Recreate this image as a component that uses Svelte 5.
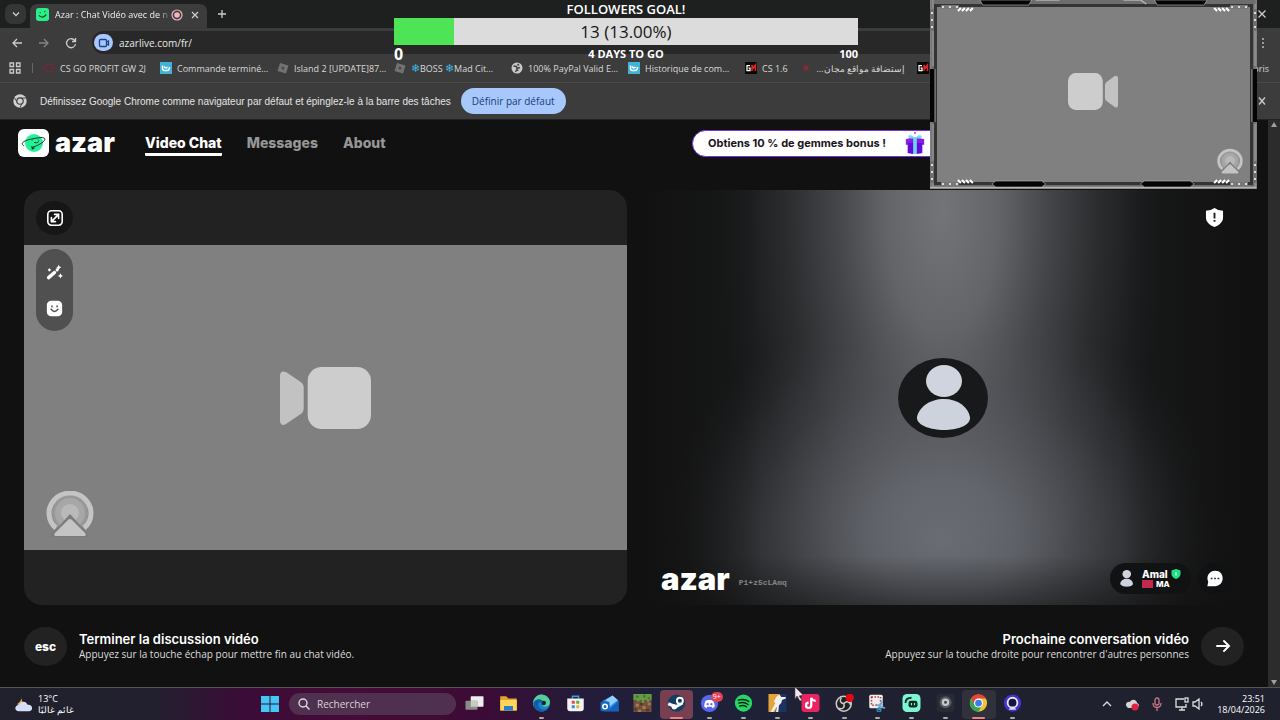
<script>
  const bookmarks = [
    { label: 'CS GO PROFIT GW 2J', icon: 'red', wide: true },
    { label: 'Commande terminé…', icon: 'shop', wide: true },
    { label: 'Island 2 [UPDATE]87…', icon: 'roblox', wide: true },
    { label: 'BOSS', second: 'Mad Cit…', icon: 'roblox', wide: true },
    { label: '100% PayPal Valid E…', icon: 'globe', wide: true },
    { label: 'Historique de com…', icon: 'shop', wide: true },
    { label: 'CS 1.6', icon: 'gm' },
    { label: 'إستضافة مواقع مجان…', icon: 'star', rtl: true },
    { label: 'GM', icon: 'gm' }
  ];

  const icons = {
    red: '<rect x="3" y="5" width="18" height="14" rx="3" fill="none" stroke="#7a2436" stroke-width="2.5"/>',
    shop: '<rect width="24" height="24" fill="#3fb4d8"/><path d="M5 7v6q0 4 4 4h5q5 0 5-7M8 9q3 5 7 1" fill="none" stroke="#fff" stroke-width="3"/>',
    roblox: '<path d="M6 2l17 5-5 16L1 18z" fill="#727272"/><path d="M10 9l5 1.500-1.500 5-5-1.500z" fill="#4a4a4a"/>',
    globe: '<circle cx="12" cy="12" r="11" fill="#c9c9c9"/><path d="M5 8l6 1 1 4 6-2M13 4l3 3M9 20l2-4 4 1" fill="none" stroke="#454545" stroke-width="3"/>',
    gm: '<rect width="24" height="24" fill="#080808"/><path d="M10 7H4v10h6v-5H7" fill="none" stroke="#fff" stroke-width="2.500"/><path d="M14 18V6l3 6 4-6v12" fill="none" stroke="#e22424" stroke-width="3"/>',
    star: '<path d="M12 4l2 5h6l-5 4 2 6-5-4-5 4 2-6-5-4h6z" fill="#8d2a34"/>'
  };

  const apps = [
    { name: 'Vue des tâches', svg: '<rect x="7" y="3" width="17" height="14" rx="1" fill="#eee"/><rect x="0" y="9" width="16" height="12" rx="1" fill="#888b88"/><path d="M7 9h9v8H7z" fill="#c7cac7"/>' },
    { name: 'Explorateur', svg: '<path d="M1 3h8l3 3h11v16H1z" fill="#e5a52a"/><path d="M1 8h22v14H1z" fill="#ffd45a"/><path d="M6 16h12v6H6z" fill="#2681c8"/>' },
    { name: 'Edge', dot: true, svg: '<circle cx="12" cy="12" r="11.500" fill="#1685cf"/><path d="M1 12C2 3 9 0 14 1c7 1 10 7 9 12-1 4-7 5-10 3 3-3 1-7-3-7-5 0-9 4-8 9z" fill="#55cf94"/><path d="M1 12c2-5 10-7 13-2-5-1-9 4-5 8 3 4 8 4 12 1-5 7-18 6-20-7z" fill="#155ba5"/><circle cx="15" cy="12" r="3" fill="#17243e"/>' },
    { name: 'Microsoft Store', svg: '<path d="M8 6V3h8v3" fill="none" stroke="#36a4dc" stroke-width="2"/><path d="M1 6h22v13q0 4-4 4H5q-4 0-4-4z" fill="#f2f2f2"/><path d="M7 9h4v4H7z" fill="#e64c35"/><path d="M13 9h4v4h-4z" fill="#66a83a"/><path d="M7 15h4v4H7z" fill="#2397db"/><path d="M13 15h4v4h-4z" fill="#e9b526"/>' },
    { name: 'Outlook', svg: '<path d="M3 9L16 2l8 7v14H5z" fill="#328ce0"/><path d="M7 8l9-6 7 6-10 8z" fill="#8fd1ff"/><path d="M9 23L24 9v14z" fill="#1361bd"/><rect x="0" y="10" width="12" height="13" rx="2" fill="#1767bd"/><circle cx="6" cy="16.500" r="3" fill="none" stroke="#fff" stroke-width="2"/>' },
    { name: 'Minecraft', svg: '<rect width="24" height="24" fill="#74513a"/><path d="M0 0h24v8h-3v3h-3V8h-4v4h-3V8H8v2H5V8H0z" fill="#659c43"/><path d="M3 2h4v3H3zM13 1h3v4h-3zM19 4h3v3h-3z" fill="#467832"/><path d="M3 13h4v4H3zM12 16h4v4h-4zM19 12h4v3h-4zM6 21h4v3H6z" fill="#a77955"/><path d="M9 12h3v3H9zM17 20h4v3h-4zM1 19h3v3H1z" fill="#4f3529"/>' },
    { name: 'Steam', dot: true, active: 'red', svg: '<circle cx="12" cy="12" r="11.500" fill="#153c62"/><path d="M1 13l10 4 9-5" stroke="#f3f3f3" stroke-width="4" fill="none"/><circle cx="16.500" cy="9" r="4" fill="#153c62" stroke="#fff" stroke-width="2.500"/><circle cx="9" cy="17" r="3.500" fill="#fff"/>' },
    { name: 'Discord', dot: true, svg: '<circle cx="12" cy="12.500" r="11.500" fill="#5965ec"/><path d="M5 17c0-4 1-7 2-8l3-1h4l3 1c1 2 2 5 2 8l-3 2-1-2H9l-1 2z" fill="#fff"/><circle cx="9.500" cy="13.500" r="1.500" fill="#5965ec"/><circle cx="14.500" cy="13.500" r="1.500" fill="#5965ec"/>', badge: '9+' },
    { name: 'Spotify', dot: true, svg: '<circle cx="12" cy="12" r="11.500" fill="#25d865"/><path d="M5 8c5-1 10-1 14 2M6 12c4-1 8-1 12 2M7 16c3-1 6-1 9 1" fill="none" stroke="#102416" stroke-width="2" stroke-linecap="round"/>' },
    { name: 'Counter-Strike', dot: true, svg: '<rect width="24" height="24" fill="#1b3262"/><path d="M0 0h15L9 24H0z" fill="#e6a33a"/><path d="M11 3l4-2 2 3 6 0v2l-5 2-1 4-3 3-1 9h-3l1-7-5 7H3l6-12-2-2z" fill="#f2f1ed"/>' },
    { name: 'TikTok', dot: true, svg: '<rect width="24" height="24" rx="4" fill="#eb2360"/><path d="M13 5v10a3.500 3.500 0 1 1-3.500-3.500M13 5c1 3 3 4 6 4" fill="none" stroke="#fff" stroke-width="3"/>' },
    { name: 'OBS', dot: true, svg: '<circle cx="11" cy="13" r="10" fill="#202024" stroke="#ccc" stroke-width="2"/><path d="M11 13c-5-1-6-5-3-8M11 13c4-5 9-2 9 2M11 13c2 5-2 8-7 6" fill="none" stroke="#ccc" stroke-width="2"/><circle cx="19" cy="5" r="5.500" fill="#e30912"/>' },
    { name: 'Capture', dot: true, svg: '<rect x="1" y="1" width="18" height="18" rx="2" fill="#eee"/><path d="M4 4h12v11H4z" fill="none" stroke="#b83a35" stroke-width="2" stroke-dasharray="2 2"/><path d="M10 14l12 5M18 9l-4 12" stroke="#6dabd1" stroke-width="2.500"/><circle cx="14" cy="21" r="2.500" fill="none" stroke="#2c84bf" stroke-width="2"/>' },
    { name: 'Streamlabs', dot: true, svg: '<rect width="24" height="24" rx="6" fill="#80f5d2"/><rect x="8" y="9" width="12" height="9" rx="3" fill="#0b2d28"/><path d="M4 12c0-5 3-7 8-7" fill="none" stroke="#0b2d28" stroke-width="2.500"/><path d="M12 12v3M16 12v3" stroke="#80f5d2" stroke-width="1.500"/>' },
    { name: 'Caméra', dot: true, svg: '<rect width="24" height="24" rx="5" fill="#272b33"/><circle cx="12" cy="11" r="8" fill="#555961"/><circle cx="12" cy="11" r="5" fill="#c7c8ce"/><circle cx="12" cy="11" r="2" fill="#444850"/>' },
    { name: 'Google Chrome', dot: true, active: 'soft', svg: '<circle cx="12" cy="12" r="11.500" fill="#efc437"/><path d="M2 6C7-2 18-1 22 6H12l-5 9z" fill="#e64436"/><path d="M2 6l6 10h8l-4 7.500C2 23-2 14 2 6z" fill="#36a454"/><circle cx="12" cy="12" r="6" fill="#fff"/><circle cx="12" cy="12" r="4.500" fill="#3c7bea"/>' },
    { name: 'Logitech', dot: true, svg: '<circle cx="12" cy="12" r="11.500" fill="#4930d3"/><circle cx="12" cy="11.500" r="6.500" fill="#17143e" stroke="#e7e7fb" stroke-width="2.500"/><path d="M7 21l2-3h6l2 3" fill="#d9d9f8"/>' }
  ];
</script>

{#snippet camera(flip)}
  <svg class="camera" class:flip viewBox="0 0 92 62" preserveAspectRatio="none" aria-hidden="true">
    <rect x="0" y="0" width="64" height="62" rx="14" fill="#cdcdcd" />
    <path d="M68 21q0-4 3-6L86 5q6-2 6 4v44q0 7-6 4L71 47q-3-2-3-6z" fill="#c2c2c2" />
  </svg>
{/snippet}

{#snippet broadcast()}
  <svg class="broadcast" viewBox="0 0 48 46" aria-hidden="true">
    <circle cx="24" cy="22" r="18" fill="#989898" />
    <circle cx="24" cy="22" r="15" fill="#a7a7a7" />
    <circle cx="24" cy="22" r="9" fill="#b9b9b9" />
    <path d="M10 37A21 20 0 1 1 38 37" fill="none" stroke="#c4c4c4" stroke-width="5" />
    <path d="M24 23L3 46h42z" fill="#7c7c7c" />
    <path d="M24 28q1 0 2 1l13 13q2 3-1 3H10q-3 0-1-3l13-13q1-1 2-1z" fill="#c4c4c4" />
  </svg>
{/snippet}

{#snippet person()}
  <svg viewBox="0 0 54 66" preserveAspectRatio="none" aria-hidden="true">
    <ellipse cx="28" cy="16" rx="18" ry="16" fill="#d0d4df" />
    <path d="M1 52C3 42 14 34 28 34s24 8 26 18c1 8-12 13-26 13S0 60 1 52z" fill="#ccd3dc" />
  </svg>
{/snippet}

<div class="screen">
  <header class="browser">
    <div class="tabs">
      <button class="tab-menu" aria-label="Rechercher des onglets"><svg viewBox="0 0 12 12"><path d="M3 4.500l3 3 3-3" /></svg></button>
      <div class="tab">
        <svg class="favicon" viewBox="0 0 14 14"><rect width="14" height="14" rx="3" fill="#28ef88" /><path d="M4 5h1M9 4h1M3 8q4 4 8-1" fill="none" stroke="#174a30" stroke-width="1.300" /></svg>
        <span class="tab-title">Azar : Chat Vidéo avec de n</span>
        <svg class="rec" viewBox="0 0 12 12"><circle cx="6" cy="6" r="5" fill="none" stroke="#eeb5bd" stroke-width="1.200" /><circle cx="6" cy="6" r="2.800" fill="#eeb5bd" /></svg>
        <button class="plain" aria-label="Fermer l'onglet"><svg viewBox="0 0 12 12"><path d="M3 3l6 6M9 3l-6 6" /></svg></button>
      </div>
      <button class="plain new-tab" aria-label="Nouvel onglet"><svg viewBox="0 0 12 12"><path d="M6 2v8M2 6h8" /></svg></button>
      <button class="plain far" aria-label="Fermer"><svg viewBox="0 0 12 12"><path d="M2.500 2.500l7 7M9.500 2.500l-7 7" /></svg></button>
    </div>
    <div class="toolbar">
      <button class="plain" aria-label="Retour"><svg viewBox="0 0 12 12"><path d="M11 6H2M6 2L2 6l4 4" /></svg></button>
      <button class="plain dim" aria-label="Avancer"><svg viewBox="0 0 12 12"><path d="M1 6h9M6 2l4 4-4 4" /></svg></button>
      <button class="plain" aria-label="Actualiser"><svg viewBox="0 0 12 12"><path d="M10 4a4.500 4.500 0 1 0 .5 3M10.500 1v3.500H7" /></svg></button>
      <div class="address">
        <span class="cam-chip"><svg viewBox="0 0 12 12"><rect x="1.500" y="2.500" width="7" height="7" rx="1" /><path d="M8.500 5l2-1v4l-2-1" /></svg></span>
        <input aria-label="Adresse" value="azarlive.com/fr/" />
      </div>
      <button class="plain" aria-label="Menu"><svg viewBox="0 0 12 12"><path d="M6 1v2M6 5v2M6 9v2" /></svg></button>
    </div>
    <nav class="bookmarks" aria-label="Favoris">
      <svg class="grid-icon" viewBox="0 0 12 12"><path d="M1 1h3.500v3.500H1zM7.500 1H11v3.500H7.500zM1 7.500h3.500V11H1zM7.500 7.500H11V11H7.500z" /></svg>
      <span class="sep"></span>
      {#each bookmarks as b}
        <a href="#top" class:wide={b.wide}>
          <svg viewBox="0 0 24 24">{@html icons[b.icon]}</svg>
          {#if b.second}
            <span class="frost"><i>❄</i>{b.label} <i>❄</i>{b.second}</span>
          {:else}
            <span dir={b.rtl ? 'rtl' : 'ltr'}>{b.label}</span>
          {/if}
        </a>
      {/each}
      <a class="all" href="#top">Tous les favoris</a>
    </nav>
    <div class="infobar">
      <svg class="chrome-mark" viewBox="0 0 24 24"><circle cx="12" cy="12" r="11.500" fill="#d0d0d0" /><path d="M12 7h10M8 15L2 6M16 15l-4 8" stroke="#3c3c3c" stroke-width="1.500" /><circle cx="12" cy="12" r="5.500" fill="#d0d0d0" stroke="#3c3c3c" stroke-width="2" /></svg>
      <span class="notice">Définissez Google Chrome comme navigateur par défaut et épinglez-le à la barre des tâches</span>
      <button class="default">Définir par défaut</button>
      <button class="plain far" aria-label="Ignorer"><svg viewBox="0 0 12 12"><path d="M3 2.500l6 7M9 2.500l-6 7" /></svg></button>
    </div>
  </header>

  <div class="viewport">
    <main class="page" id="top">
      <div class="site-head">
        <a class="brand" href="#top">
          <svg viewBox="0 0 31 28"><rect width="31" height="28" rx="6" fill="#fff" /><circle cx="16" cy="14" r="9" fill="#23f397" /><path d="M6 17C0 13 10 10 23 8.500c8 0 3 6-9 10M14 11.500l1-1M20 10.500l1 1M16 13.500q3 1 5-1" fill="none" stroke="#15392b" /><path d="M13 17l4 2-3 2z" fill="#173b2d" /></svg>
          <span class="wordmark">azar</span>
        </a>
        <nav class="site-nav" aria-label="Navigation">
          <a class="current" href="#top">Video Chat</a>
          <a href="#top">Messages</a>
          <a href="#top">About</a>
        </nav>
        <button class="bonus">
          <span>Obtiens 10 % de gemmes bonus !</span>
          <svg viewBox="0 0 24 26"><path d="M2 9q9-4 20 0v6H2z" fill="#8b1be9" /><path d="M4 13h16v11q-8 2-16 0z" fill="#650bd5" /><path d="M10 7h4v18h-4z" fill="#67d7f2" /><path d="M12 8C8 2 2 5 6 8zM12 8c4-6 10-3 6 0z" fill="#74d9f3" /><path d="M11 1h2v2h-2z" fill="#d34cff" /></svg>
        </button>
      </div>

      <div class="panels">
        <section class="panel mine" aria-label="Votre caméra">
          <div class="feed">
            {@render camera(true)}
            {@render broadcast()}
          </div>
          <button class="expand" aria-label="Agrandir"><svg viewBox="0 0 20 20"><rect x="2" y="2" width="16" height="16" rx="4" /><path d="M6 14l8-8M9.500 6H14v4.500M6 9.500V14h4.500" /></svg></button>
          <div class="effects">
            <button aria-label="Effets"><svg viewBox="0 0 20 20"><path d="M3 16L10 10" stroke-width="4" /><path d="M13 7l.5-.5" stroke-width="3.500" /><path d="M15 1l1 2 2 1-2 1-1 2-1-2-2-1 2-1zM17 11l1 2 2 1-2 1-1 2-1-2-2-1 2-1zM4 5l1 1 1 1-1 1-1 1-1-1-1-1 1-1z" fill="#fff" stroke="none" /></svg></button>
            <button aria-label="Autocollants"><svg viewBox="0 0 20 20"><rect x="1" y="1" width="18" height="18" rx="5" fill="#fff" stroke="none" /><path d="M7 7v1M13 7v1M6 11q4 5 8 0" stroke="#505050" /></svg></button>
          </div>
        </section>

        <section class="panel partner" aria-label="Amal">
          <button class="shield" aria-label="Signaler"><svg viewBox="0 0 20 20"><path d="M10 0q4 3 9 3v7c0 5-4 8-9 10-5-2-9-5-9-10V3q5 0 9-3z" fill="#fff" /><path d="M10 5v6M10 12.500v2" stroke="#222" stroke-width="2" /></svg></button>
          <div class="avatar">{@render person()}</div>
          <div class="partner-foot">
            <span class="wordmark big">azar</span>
            <span class="code">P1+z5cLAmq</span>
            <button class="user">
              {@render person()}
              <span class="who">
                <b>Amal <svg viewBox="0 0 20 20"><path d="M10 0l9 3v7c0 5-4 8-9 10-5-2-9-5-9-10V3z" fill="#22df83" /><path d="M8 6h4v7H8z" fill="#95ffc9" /></svg></b>
                <small><i class="flag"></i>MA</small>
              </span>
            </button>
            <button class="chat" aria-label="Discuter"><svg viewBox="0 0 20 20"><path d="M10 1c6 0 9 4 9 9s-4 9-9 9H1l1-5C-1 7 4 1 10 1z" fill="#fff" /><path d="M5 10h2M9 10h2M13 10h2" stroke="#222" stroke-width="2" /></svg></button>
          </div>
        </section>
      </div>

      <footer class="actions">
        <button class="round">esc</button>
        <div><h2>Terminer la discussion vidéo</h2><p>Appuyez sur la touche échap pour mettre fin au chat vidéo.</p></div>
        <div class="next"><h2>Prochaine conversation vidéo</h2><p>Appuyez sur la touche droite pour rencontrer d'autres personnes</p></div>
        <button class="round" aria-label="Suivant"><svg viewBox="0 0 16 16"><path d="M2 8h12M9 3l5 5-5 5" /></svg></button>
      </footer>
    </main>
    <div class="scrollbar">
      <svg viewBox="0 0 8 8"><path d="M4 1l3 5H1z" /></svg>
      <svg viewBox="0 0 8 8"><path d="M4 7L1 2h6z" /></svg>
    </div>
  </div>

  <footer class="taskbar">
    <div class="weather">
      <svg viewBox="0 0 20 20"><path d="M8 1c-1 6 2 9 7 9-2 4-10 4-12 0C6 8 8 5 8 1z" fill="#eba347" /><path d="M5 18c-6 0-5-7 0-7 2-5 9-4 9 0 7-1 7 7 2 7z" fill="#d4def7" /></svg>
      <span>13°C<br /><span dir="rtl">غائم غالبًا</span></span>
    </div>
    <button class="start" aria-label="Démarrer"><svg viewBox="0 0 18 16"><path d="M0 0h8.500v7.500H0zM9.500 0H18v7.500H9.500zM0 8.500h8.500V16H0zM9.500 8.500H18V16H9.500z" fill="#43c8f5" /></svg></button>
    <label class="search">
      <svg viewBox="0 0 12 12"><circle cx="5" cy="5" r="4" /><path d="M8 8l3.500 3.500" /></svg>
      <input placeholder="Rechercher" aria-label="Rechercher" />
    </label>
    <div class="apps">
      {#each apps as app}
        <button class={app.active} class:open={app.dot} aria-label={app.name}>
          <svg viewBox="0 0 24 24">{@html app.svg}</svg>
          {#if app.badge}<span class="badge">{app.badge}</span>{/if}
        </button>
      {/each}
    </div>
    <div class="tray">
      <svg viewBox="0 0 14 14"><path d="M3 9l4-4 4 4" /></svg>
      <svg viewBox="0 0 14 14"><path d="M2 10C-1 7 3 4 5 5c2-4 7-2 7 1 3 1 2 5-1 5H3z" fill="#d5d5d8" stroke="none" /><circle cx="10" cy="10" r="3.500" fill="#dc2440" stroke="none" /></svg>
      <svg class="mic" viewBox="0 0 14 14"><rect x="5" y="1" width="4" height="7" rx="2" /><path d="M3 6c0 6 8 6 8 0M7 11v3" /></svg>
      <span class="pair">
        <svg viewBox="0 0 14 14"><path d="M9 2H1v8h10V7M4 13h6M7 10v3" /><rect x="10" y="1" width="3" height="4" /></svg>
        <svg viewBox="0 0 14 14"><path d="M1 5h2l4-3v10L3 9H1zM9 5q2 2 0 4" /></svg>
      </span>
      <time>23:51<br />18/04/2026</time>
    </div>
  </footer>

  <aside class="goal">
    <strong>FOLLOWERS GOAL!</strong>
    <div class="goal-bar" style="--done: 13%"><span>13 (13.00%)</span></div>
    <div class="goal-foot"><b class="zero">0</b><b>4 DAYS TO GO</b><b>100</b></div>
  </aside>

  <aside class="webcam">
    {@render camera(false)}
    {@render broadcast()}
    <svg class="frame" viewBox="0 0 328 189" preserveAspectRatio="none" aria-hidden="true">
      <path d="M4 2H324V185H4z" fill="none" stroke="#6d6d6d" stroke-width="5" />
      <path d="M5.500 5.500H322.500V183.500H5.500z" fill="none" stroke="#343434" stroke-width="3" />
      <path d="M3 0V66M3 124V188M326 4V66M326 124V188" stroke="#a4a4a4" stroke-width="1" />
      <path d="M106 0h24M194 0h17l6 4M0 187.500h327" fill="none" stroke="#b4b4b4" stroke-width="1.500" />
      <path d="M50 0h52l-3 5H53zM225 0h53l-3 5H228zM66 181h46l4 3-4 3H66l-4-3zM215 181h46l4 3-4 3h-46l-4-3z" fill="#050505" stroke="#bbb" stroke-width=".6" />
      <path d="M0 69h5v53H0zM323 69h6v53h-6z" fill="#050505" />
      <path d="M5 69v53M323 69v53" stroke="#ddd" stroke-width=".7" />
      <path d="M2 9v22M2 161v22M326 9v22M326 161v22" stroke="#6f6f6f" stroke-width="4" />
      <path d="M2 12v19M2 164v19M326 12v19M326 164v19" stroke="#fff" stroke-width="1.500" stroke-dasharray="2 5" />
      <path d="M11 7h18M301 7h18M11 184h18M301 184h18" stroke="#777" stroke-width="4" />
      <path d="M12 7h18M302 7h18M12 184h18M302 184h18" stroke="#fff" stroke-width="1.500" stroke-dasharray="2 5" />
      <path d="M28 11l3-3M32 11l3-3M36 11l3-3M40 11l3-3M285 8l3 3M289 8l3 3M293 8l3 3M297 8l3 3M28 180l3 3M32 180l3 3M36 180l3 3M40 180l3 3M285 183l3-3M289 183l3-3M293 183l3-3M297 183l3-3" stroke="#fff" stroke-width="2" />
    </svg>
  </aside>

  <svg class="pointer" viewBox="0 0 10 16" aria-hidden="true"><path d="M1 1l8 8-4 1 3 4-2 1-3-5-2 3z" fill="#f5e9ee" stroke="#554652" stroke-width=".6" /></svg>
</div>

<style>
  :global(body) { margin: 0; background: #111; }
  .screen, .screen * { box-sizing: border-box; }
  .screen { position: relative; min-height: 100vh; display: flex; flex-direction: column; overflow: hidden; background: #111; color: #fff; font: 10px "Open Sans", "Noto Sans", sans-serif; }
  button { border: 0; padding: 0; background: none; color: inherit; font: inherit; }
  input { border: 0; padding: 0; background: none; color: inherit; font: inherit; min-width: 0; outline: 0; }
  a { color: inherit; text-decoration: none; }
  svg { display: block; flex: none; }
  .plain { display: flex; }
  .plain svg, .tab-menu svg { width: 12px; height: 12px; fill: none; stroke: #ccc; stroke-width: 1.3; }
  .dim { opacity: .5; }
  .far { margin-left: auto; }

  .browser { border-bottom: 1px solid #222; background: #3c3c3c; color: #d8d8d8; }
  .tabs { display: flex; align-items: center; height: 28px; padding: 0 12px 0 5px; background: #1e201f; }
  .tab-menu { display: grid; place-items: center; width: 21px; height: 20px; border-radius: 7px; background: #343535; }
  .tab { display: flex; align-items: center; align-self: flex-end; width: 177px; height: 24px; margin-left: 4px; padding: 0 6px 3px; border-radius: 7px 7px 0 0; background: #3c3c3c; color: #eee; }
  .favicon { width: 13px; height: 13px; }
  .tab-title { flex: 1; margin-left: 6px; white-space: nowrap; font-size: 9px; font-weight: 500; mask-image: linear-gradient(90deg, #000 90%, transparent); }
  .rec { width: 12px; height: 12px; margin-right: 6px; }
  .new-tab { margin-left: 9px; }
  .toolbar { display: flex; align-items: center; gap: 15px; height: 29px; padding: 0 11px; background: #3c3c3c; }
  .address { flex: 1; display: flex; align-items: center; gap: 6px; height: 23px; padding: 0 2px; border-radius: 12px; background: #282828; }
  .cam-chip { display: grid; place-items: center; width: 19px; height: 17px; border-radius: 9px; background: #a9c7fa; }
  .cam-chip svg { width: 12px; height: 12px; fill: none; stroke: #174484; stroke-width: 1.3; }
  .address input { flex: 1; color: #e8e8e8; }
  .bookmarks { display: flex; align-items: center; gap: 12px; height: 25px; padding: 0 11px 3px 9px; overflow: hidden; white-space: nowrap; font-size: 9px; }
  .grid-icon { width: 12px; height: 12px; fill: none; stroke: #ccc; stroke-width: 1.3; }
  .sep { width: 1px; height: 10px; margin: 0 -2px 0 -1px; background: #666; }
  .bookmarks a { flex: none; display: flex; align-items: center; gap: 5px; }
  .bookmarks .wide { width: 105px; }
  .bookmarks a svg { width: 12px; height: 12px; }
  .frost i { font-size: 11px; line-height: 12px; font-style: normal; color: #42b5e8; }
  .bookmarks .all { margin-left: auto; }
  .infobar { display: flex; align-items: center; height: 37px; padding: 0 12px 0 13px; border-top: 1px solid #4b4b4b; color: #e4e4e4; }
  .notice { font-family: "Liberation Sans", sans-serif; }
  .chrome-mark { width: 14px; height: 14px; margin-right: 13px; }
  .default { height: 26px; margin-left: 10px; padding: 0 11px; border-radius: 13px; background: #a8c7fa; color: #173f7c; }

  .viewport { flex: 1; display: flex; }
  .page { flex: 1; display: flex; flex-direction: column; min-width: 0; padding: 0 24px; font-family: Inter, sans-serif; }
  .scrollbar { width: 12px; display: flex; flex-direction: column; align-items: center; justify-content: space-between; padding: 1px 0; background: #2c2c2c; }
  .scrollbar svg { width: 8px; height: 8px; fill: #a0a0a0; }
  .site-head { display: flex; align-items: center; height: 46px; margin: 0 0 24px -6px; }
  .brand { display: flex; align-items: center; gap: 6px; width: 127px; }
  .brand svg { width: 31px; height: 28px; }
  .wordmark { font: 900 27px/20px Inter, sans-serif; }
  .site-nav { display: flex; gap: 25px; padding-top: 2px; font-size: 14px; line-height: 20px; font-weight: 800; color: #969696; }
  .site-nav a { border-bottom: 3px solid transparent; border-radius: 1px; }
  .site-nav .current { color: #fff; border-color: #fff; }
  .bonus { display: flex; align-items: center; justify-content: space-between; width: 256px; height: 27px; margin-left: auto; margin-right: 296px; padding: 0 21px 0 15px; border: 1px solid #7b32da; border-radius: 14px; background: #fff; color: #17151a; font-size: 11px; font-weight: 700; white-space: nowrap; }
  .bonus svg { width: 22px; height: 24px; }

  .panels { flex: 1; display: grid; grid-template-columns: 1fr 1fr; gap: 14px; }
  .panel { position: relative; display: grid; align-items: center; overflow: hidden; border-radius: 18px; }
  .mine { background: #222; }
  .feed { position: relative; display: grid; place-items: center; aspect-ratio: 603 / 305; background: #808080; }
  .camera { width: 91px; height: 62px; }
  .flip { transform: scaleX(-1); }
  .broadcast { position: absolute; left: 22px; bottom: 13px; width: 48px; height: 46px; }
  .expand { position: absolute; top: 11px; left: 12px; display: grid; place-items: center; width: 37px; height: 34px; border-radius: 50%; background: #161616; }
  .expand svg, .effects svg { width: 18px; height: 18px; fill: none; stroke: #fff; stroke-width: 1.8; stroke-linecap: round; }
  .effects { position: absolute; top: 59px; left: 12px; display: grid; place-items: center; width: 37px; height: 82px; padding: 5px 0; border-radius: 19px; background: #505050; }
  .effects svg { width: 17px; height: 17px; }
  .partner {
    background:
      linear-gradient(90deg, #111 0%, transparent 20%, transparent 80%, #111 100%),
      linear-gradient(0deg, rgba(17, 17, 17, .5) 0%, transparent 12%),
      radial-gradient(ellipse 48% 56% at 50% 84%, rgba(112, 115, 123, .9) 0%, rgba(110, 113, 121, .78) 25%, rgba(106, 108, 116, .56) 45%, rgba(100, 102, 110, .28) 68%, rgba(90, 92, 100, .08) 88%, transparent 100%),
      radial-gradient(ellipse 37% 120% at 50% 5%, rgba(120, 121, 125, .95) 0%, rgba(116, 117, 121, .82) 25%, rgba(106, 107, 112, .55) 47%, rgba(92, 93, 98, .28) 70%, rgba(80, 81, 86, .08) 88%, transparent 100%),
      #18191a;
  }
  .shield { position: absolute; top: 18px; right: 20px; }
  .shield svg { width: 19px; height: 19px; }
  .avatar { display: grid; place-items: center; justify-self: center; width: 90px; height: 80px; border-radius: 50%; background: #18191a; }
  .avatar svg { width: 54px; height: 66px; }
  .partner-foot { position: absolute; inset: auto 12px 11px 20px; display: flex; align-items: center; }
  .big { font-size: 31px; }
  .code { margin: 8px auto 0 9px; color: #858585; font: 700 8px "Liberation Mono", monospace; }
  .user { display: flex; align-items: center; gap: 9px; width: 81px; height: 31px; padding: 0 10px; border-radius: 16px; background: #111214; text-align: left; }
  .user > svg { width: 13px; height: 17px; }
  .who b, .who small { display: flex; align-items: center; gap: 3px; font-size: 10px; line-height: 11px; font-weight: 800; }
  .who small { font-size: 8px; line-height: 9px; }
  .who svg { width: 10px; height: 10px; }
  .flag { width: 11px; height: 8px; background: #c4294d; }
  .chat { display: grid; place-items: center; width: 34px; height: 31px; margin-left: 7px; border-radius: 50%; background: #101112; }
  .chat svg { width: 18px; height: 17px; }

  .actions { display: flex; align-items: center; height: 82px; }
  .round { display: grid; place-items: center; width: 43px; height: 39px; border-radius: 50%; background: #222; font-size: 12px; font-weight: 800; }
  .round svg { width: 16px; height: 16px; fill: none; stroke: #fff; stroke-width: 2; stroke-linecap: round; }
  .actions div { margin-left: 12px; padding-top: 2px; }
  .actions .next { margin: 0 12px 0 auto; text-align: right; }
  h2 { margin: 0; font-size: 13px; line-height: 15px; font-weight: 600; }
  p { margin: 0; color: #ddd; font: 500 10px/15px "Open Sans", sans-serif; }

  .taskbar { display: flex; align-items: center; height: 33px; border-top: 1px solid #555; background: linear-gradient(90deg, #20202c 0%, #22202e 12%, #3a0c37 19%, #460b38 28%, #3b0b36 38%, #241b39 45%, #1e213b 53%, #202130 70%, #20212e 100%); }
  .weather { display: flex; align-items: center; gap: 5px; width: 259px; padding-left: 14px; font-size: 9px; line-height: 11px; }
  .weather svg { width: 19px; height: 18px; }
  .start { display: grid; place-items: center; width: 22px; height: 22px; }
  .start svg { width: 18px; height: 16px; }
  .search { display: flex; align-items: center; gap: 7px; width: 167px; height: 22px; margin-left: 8px; padding: 0 9px; border-radius: 11px; background: #50304f; }
  .search svg { width: 12px; height: 12px; fill: none; stroke: #ddd; stroke-width: 1.4; }
  .search input { flex: 1; }
  .search input::placeholder { color: #ddd0dc; opacity: 1; }
  .apps { display: flex; width: 571px; margin-left: 2px; }
  .apps button { position: relative; flex: 1; display: grid; place-items: center; height: 29px; padding-bottom: 2px; border-radius: 4px; }
  .apps svg { width: 19px; height: 18px; }
  .apps .open::after { content: ""; position: absolute; bottom: 0; width: 5px; height: 2px; border-radius: 1px; background: #aaa; }
  .apps .red { background: #783f50; }
  .apps .soft { background: #30313b; }
  .apps .red::after, .apps .soft::after { width: 13px; background: #f28182; }
  .badge { position: absolute; top: 2px; right: 4px; width: 12px; height: 10px; border-radius: 5px; background: #e33f52; font-size: 7px; line-height: 10px; text-align: center; }
  .tray { display: flex; align-items: center; gap: 11px; margin-left: auto; padding-right: 15px; }
  .tray svg { width: 14px; height: 14px; fill: none; stroke: #ddd; stroke-width: 1.3; }
  .tray .mic { stroke: #c77885; }
  .pair { display: flex; gap: 3px; }
  time { font-size: 9px; line-height: 11px; text-align: right; }

  .goal { position: absolute; top: 0; left: 394px; width: 464px; font-family: "Open Sans", sans-serif; text-align: center; }
  .goal strong { display: block; font-size: 13px; line-height: 18px; font-weight: 600; }
  .goal-bar { height: 27px; background: linear-gradient(90deg, #4de455 var(--done), #dcdcdc var(--done)); color: #161616; font-size: 17px; line-height: 27px; }
  .goal-foot { display: grid; grid-template-columns: 1fr auto 1fr; align-items: center; font-size: 11px; line-height: 18px; }
  .goal-foot b:last-child { text-align: right; }
  .goal-foot .zero { font-size: 16px; text-align: left; }

  .webcam { position: absolute; top: 0; right: 23px; display: grid; place-items: center; width: 327px; height: 189px; padding: 0 2px 6px 0; background: #808080; }
  .webcam .camera { width: 50px; height: 37px; }
  .webcam .broadcast { left: auto; right: 14px; bottom: 14px; width: 26px; height: 27px; }
  .frame { position: absolute; inset: 0; width: 100%; height: 100%; }
  .pointer { position: absolute; top: 686px; left: 794px; width: 10px; height: 16px; }
</style>
